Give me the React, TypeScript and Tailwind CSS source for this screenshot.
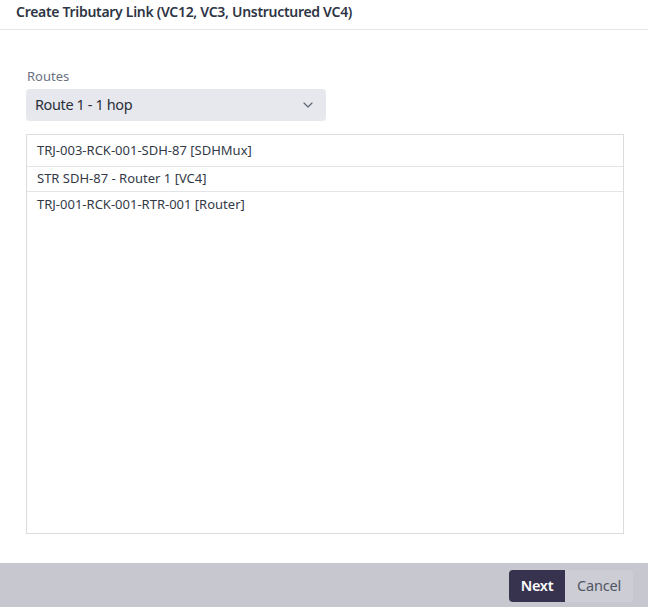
import React from 'react';
import { ChevronDown } from 'lucide-react';

const HOPS = [
    'TRJ-003-RCK-001-SDH-87 [SDHMux]',
    'STR SDH-87 - Router 1 [VC4]',
    'TRJ-001-RCK-001-RTR-001 [Router]',
];

export default function App() {
    return (
        <div
            className="w-[648px] h-[607px] bg-white flex flex-col text-[#2f3440]"
            style={{ fontFamily: '"Noto Sans", "Open Sans", sans-serif' }}
        >
            <div className="h-[30px] px-4 flex items-center border-b border-[#e5e5e8] shrink-0">
                <h1 className="text-[14px] font-semibold tracking-[-0.3px] text-[#2e3545] leading-none -mt-[6px]">
                    Create Tributary Link (VC12, VC3, Unstructured VC4)
                </h1>
            </div>

            <div className="flex-1 px-[26px] pt-[40px] flex flex-col">
                <label className="text-[13px] text-[#6b7280] leading-none mb-[6px] ml-[1px]">Routes</label>
                <button className="w-[300px] h-[32px] rounded bg-[#e6e8ee] px-[9px] flex items-center justify-between text-[14.5px] text-[#2a2f3a]">
                    <span className="tracking-[-0.4px]">Route 1 - 1 hop</span>
                    <ChevronDown size={16} strokeWidth={1.75} className="text-[#5f6672] mr-[1px]" />
                </button>

                <div className="mt-[13px] w-[598px] h-[400px] border border-[#dcdce0]">
                    {HOPS.map((hop, i) => (
                        <div
                            key={hop}
                            className={`${i === 0 ? 'h-[32px]' : 'h-[25px]'} px-[10px] flex items-center text-[13px] text-[#333a47] ${
                                i < HOPS.length - 1 ? 'border-b border-[#e3e3e8]' : ''
                            }`}
                        >
                            {hop}
                        </div>
                    ))}
                </div>
            </div>

            <div className="h-[44px] bg-[#c7c7d0] flex items-center justify-end pr-[15px] pt-[1px] shrink-0">
                <button className="h-[32px] w-[56px] rounded-l bg-[#37334f] text-white text-[14.5px] font-semibold tracking-[-0.3px]">
                    Next
                </button>
                <button className="h-[32px] w-[68px] rounded-r bg-[#cdcdd5] text-[#4f5563] text-[14.5px] tracking-[-0.2px]">
                    Cancel
                </button>
            </div>
        </div>
    );
}
